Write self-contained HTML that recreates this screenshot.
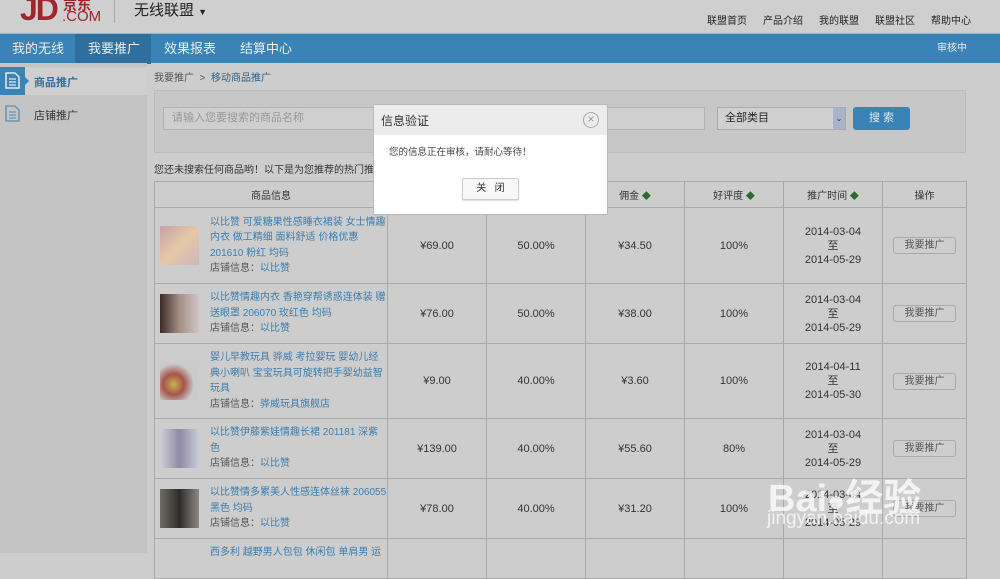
<!DOCTYPE html>
<html><head><meta charset="utf-8"><style>
*{margin:0;padding:0;box-sizing:border-box}
body{width:1000px;height:553px;overflow:hidden;background:#cdcdcd;font-family:"Liberation Sans","Noto Sans CJK SC",sans-serif;font-size:10px;color:#333;position:relative}
.a{position:absolute}
.nav span{position:absolute;top:0;height:30px;line-height:30px;color:#e8eef3;font-size:13px}
table{border-collapse:collapse;position:absolute;left:154px;top:181px;width:812px;table-layout:fixed}
td,th{border:1px solid #a9a9a9;text-align:center;font-weight:normal;font-size:11px;color:#333}
th{height:26px;font-size:10px}
.g{color:#2a6a2a;font-size:9px}
.pi{text-align:left;position:relative;padding:0 0 0 55px;vertical-align:middle}
.pi .im{position:absolute;left:5px;width:39px;height:39px;top:50%;margin-top:-20px}
.pi p{color:#3b7eb0;line-height:15.5px;font-size:10px}
.pi .s{color:#555}
.pi .s b{font-weight:normal;color:#3b7eb0}
.btn{display:inline-block;width:63px;height:17px;line-height:15px;border:1px solid #aaa;border-radius:3px;color:#555;background:#cecece;font-size:10px}
.d{line-height:14px}
</style></head><body>
<div class="a" style="left:0;top:0;width:1000px;height:33px;background:#cfcfcf"></div>
<div class="a" style="left:20px;top:-9px;font-size:32px;color:#a3242c;font-weight:bold;letter-spacing:-2px">JD</div>
<div class="a" style="left:63px;top:-5px;font-size:14px;color:#a3242c;font-weight:bold">京东</div>
<div class="a" style="left:62px;top:8px;font-size:15px;color:#a3242c">.COM</div>
<div class="a" style="left:114px;top:0;width:1px;height:23px;background:#aaa"></div>
<div class="a" style="left:134px;top:-1px;font-size:15px;color:#222">无线联盟 <span style="font-size:9px">▼</span></div>
<div class="a" style="left:707px;top:12px;font-size:10px;color:#222">
<span style="position:absolute;left:0;white-space:nowrap">联盟首页</span>
<span style="position:absolute;left:56px;white-space:nowrap">产品介绍</span>
<span style="position:absolute;left:112px;white-space:nowrap">我的联盟</span>
<span style="position:absolute;left:168px;white-space:nowrap">联盟社区</span>
<span style="position:absolute;left:224px;white-space:nowrap">帮助中心</span>
</div>
<div class="a nav" style="left:0;top:33px;width:1000px;height:30px;background:#3a83b6;border-top:1px solid #8fb4cf">
<div class="a" style="left:75px;top:0;width:76px;height:30px;background:#2f6f9e"></div>
<span style="left:12px">我的无线</span>
<span style="left:88px">我要推广</span>
<span style="left:164px">效果报表</span>
<span style="left:240px">结算中心</span>
<span style="left:937px;font-size:10px">审核中</span>
</div>
<div class="a" style="left:0;top:63px;width:147px;height:490px;background:#c4c4c4"></div>
<div class="a" style="left:0;top:67px;width:147px;height:28px;background:#cfcfcf"></div>
<div class="a" style="left:0;top:67px;width:25px;height:28px;background:#3a83b6"></div>
<div class="a" style="left:25px;top:77px;width:0;height:0;border-top:4px solid transparent;border-bottom:4px solid transparent;border-left:4px solid #3a83b6"></div>
<svg class="a" style="left:5px;top:72px" width="15" height="17" viewBox="0 0 15 17"><path d="M1 1h9l4 4v11H1z" fill="none" stroke="#dfe9f1" stroke-width="1.5"/><path d="M4 7h7M4 10h7M4 13h7" stroke="#dfe9f1" stroke-width="1.3"/></svg>
<div class="a" style="left:34px;top:74px;font-size:11px;color:#2f6f9e;font-weight:bold">商品推广</div>
<svg class="a" style="left:5px;top:105px" width="15" height="17" viewBox="0 0 15 17"><path d="M1 1h9l4 4v11H1z" fill="none" stroke="#5a8db4" stroke-width="1.3"/><path d="M4 7h7M4 10h7M4 13h7" stroke="#5a8db4" stroke-width="1.1"/></svg>
<div class="a" style="left:34px;top:107px;font-size:11px;color:#333">店铺推广</div>
<div class="a" style="left:154px;top:69px;font-size:10px;color:#555">我要推广 &nbsp;&gt;&nbsp; <span style="color:#2a5f88">移动商品推广</span></div>
<div class="a" style="left:154px;top:90px;width:812px;height:63px;background:#c7c7c7;border:1px solid #bdbdbd"></div>
<div class="a" style="left:163px;top:107px;width:542px;height:23px;background:#cfcfcf;border:1px solid #b3b3b3;color:#999;font-size:11px;line-height:21px;padding-left:8px">请输入您要搜索的商品名称</div>
<div class="a" style="left:717px;top:107px;width:129px;height:23px;background:#d0d0d0;border:1px solid #aaa;font-size:11px;line-height:21px;padding-left:7px;color:#222">全部类目</div>
<div class="a" style="left:833px;top:108px;width:12px;height:21px;background:#a9b4cc;color:#333;font-size:8px;text-align:center;line-height:21px">⌄</div>
<div class="a" style="left:853px;top:107px;width:57px;height:23px;background:#3a83b6;border-radius:3px;color:#dce8f1;font-size:11px;line-height:23px;text-align:center">搜 索</div>
<div class="a" style="left:154px;top:161px;font-size:10px;color:#333">您还未搜索任何商品哟！以下是为您推荐的热门推广商品</div>
<table>
<colgroup><col style="width:233px"><col style="width:99px"><col style="width:99px"><col style="width:99px"><col style="width:99px"><col style="width:99px"><col style="width:84px"></colgroup>
<tr><th>商品信息</th><th>价格</th><th>佣金比例</th><th>佣金 <span class="g">◆</span></th><th>好评度 <span class="g">◆</span></th><th>推广时间 <span class="g">◆</span></th><th>操作</th></tr>
<tr style="height:76px"><td class="pi"><div class="im" style="background:linear-gradient(135deg,#c9a0a8,#e4c8a8,#cfb5bd)"></div><p>以比赞 可爱糖果性感睡衣裙装 女士情趣内衣 做工精细 面料舒适 价格优惠 201610 粉红 均码</p><p class="s">店铺信息：<b>以比赞</b></p></td><td>¥69.00</td><td>50.00%</td><td>¥34.50</td><td>100%</td><td class="d">2014-03-04<br>至<br>2014-05-29</td><td><span class="btn">我要推广</span></td></tr>
<tr style="height:60px"><td class="pi"><div class="im" style="background:linear-gradient(90deg,#3a2a26,#a68f86,#cfc5c5)"></div><p>以比赞情趣内衣 香艳穿帮诱惑连体装 赠送眼罩 206070 玫红色 均码</p><p class="s">店铺信息：<b>以比赞</b></p></td><td>¥76.00</td><td>50.00%</td><td>¥38.00</td><td>100%</td><td class="d">2014-03-04<br>至<br>2014-05-29</td><td><span class="btn">我要推广</span></td></tr>
<tr style="height:75px"><td class="pi"><div class="im" style="background:radial-gradient(circle at 35% 60%,#c8b54a 0,#a6554e 30%,#cbcbcb 60%)"></div><p>婴儿早教玩具 骅威 考拉婴玩 婴幼儿经典小喇叭 宝宝玩具可旋转把手婴幼益智玩具</p><p class="s">店铺信息：<b>骅威玩具旗舰店</b></p></td><td>¥9.00</td><td>40.00%</td><td>¥3.60</td><td>100%</td><td class="d">2014-04-11<br>至<br>2014-05-30</td><td><span class="btn">我要推广</span></td></tr>
<tr style="height:60px"><td class="pi"><div class="im" style="background:linear-gradient(90deg,#cfd0d6,#8f8aa6,#c9ccd4)"></div><p>以比赞伊藤紫娃情趣长裙 201181 深紫色</p><p class="s">店铺信息：<b>以比赞</b></p></td><td>¥139.00</td><td>40.00%</td><td>¥55.60</td><td>80%</td><td class="d">2014-03-04<br>至<br>2014-05-29</td><td><span class="btn">我要推广</span></td></tr>
<tr style="height:60px"><td class="pi"><div class="im" style="background:linear-gradient(90deg,#6f6c68,#2e2c2a,#8c8985)"></div><p>以比赞情多累美人性感连体丝袜 206055 黑色 均码</p><p class="s">店铺信息：<b>以比赞</b></p></td><td>¥78.00</td><td>40.00%</td><td>¥31.20</td><td>100%</td><td class="d">2014-03-04<br>至<br>2014-05-29</td><td><span class="btn">我要推广</span></td></tr>
<tr style="height:40px"><td class="pi" style="vertical-align:top;padding-top:6px"><p>西多利 越野男人包包 休闲包 单肩男 运</p></td><td></td><td></td><td></td><td></td><td></td><td></td></tr>
</table>
<div class="a" style="left:768px;top:467px;font-size:38px;font-weight:bold;color:rgba(255,255,255,.75)">Bai<span style="font-size:30px">●</span>经验</div>
<div class="a" style="left:767px;top:508px;font-size:19px;color:rgba(255,255,255,.75)">jingyan.baidu.com</div>
<div class="a" style="left:373px;top:104px;width:235px;height:111px;background:#fff;border:1px solid #bbb"></div>
<div class="a" style="left:374px;top:105px;width:233px;height:30px;background:#ececec"></div>
<div class="a" style="left:381px;top:112px;font-size:12px;color:#333">信息验证</div>
<div class="a" style="left:583px;top:112px;width:16px;height:16px;border:1.5px solid #aaa;border-radius:50%;color:#999;font-size:12px;line-height:13px;text-align:center">×</div>
<div class="a" style="left:389px;top:144px;font-size:9.5px;color:#444">您的信息正在审核，请耐心等待！</div>
<div class="a" style="left:462px;top:178px;width:57px;height:22px;border:1px solid #ccc;border-radius:2px;background:#f8f8f8;box-shadow:0 1px 1px #ddd;font-size:10px;line-height:20px;text-align:center;color:#333">关 &nbsp; 闭</div>
</body></html>
